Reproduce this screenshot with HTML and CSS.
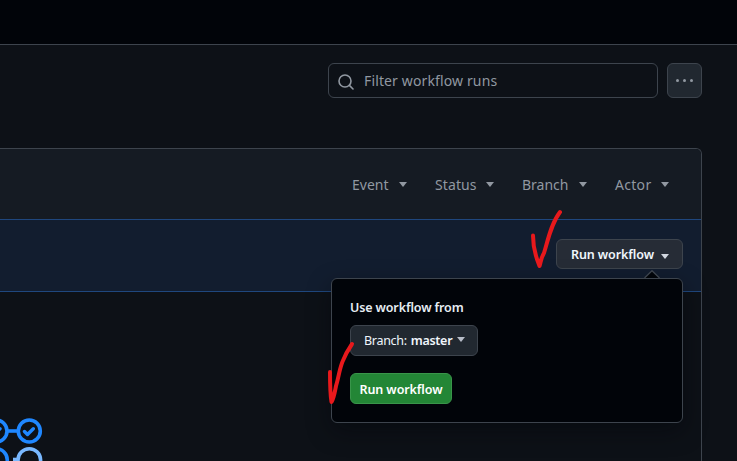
FILE: index.html
```html
<!DOCTYPE html>
<html lang="en">
<head>
<meta charset="utf-8">
<title>Workflow runs</title>
<link rel="stylesheet" href="styles.css">
</head>
<body>
<header class="topbar"></header>
<main class="content">
  <div class="toolbar">
    <label class="search">
      <svg class="search-icon" width="16" height="16" viewBox="0 0 16 16" fill="none" stroke="currentColor" stroke-width="1.6" stroke-linecap="round"><circle cx="7" cy="7" r="6"/><path d="M11.4 11.4 15 15"/></svg>
      <span class="search-text">Filter workflow runs</span>
    </label>
    <button class="more" aria-label="More options"><i></i><i></i><i></i></button>
  </div>
  <section class="runs">
    <div class="filters">
      <span class="filter event"><span>Event</span><i class="caret"></i></span>
      <span class="filter status"><span>Status</span><i class="caret"></i></span>
      <span class="filter branch"><span>Branch</span><i class="caret"></i></span>
      <span class="filter actor"><span>Actor</span><i class="caret"></i></span>
    </div>
    <div class="dispatch">
      <button class="btn run"><span>Run workflow</span><i class="caret"></i></button>
      <div class="popover">
        <svg class="tip" width="16" height="8" viewBox="0 0 16 8"><path d="M.5 8 8 .7 15.500 8" fill="#010409" stroke="#3d444d" stroke-width="1.3"/></svg>
        <div class="label"><span>Use workflow from</span></div>
        <button class="btn select"><span class="prefix">Branch:</span><b>master</b><i class="caret"></i></button>
        <button class="btn primary"><span>Run workflow</span></button>
      </div>
    </div>
    <div class="blank"></div>
  </section>
</main>
<svg class="graphic" width="50" height="50" viewBox="0 411 50 50" fill="none" stroke="#1f87ff" stroke-width="3.6">
  <path d="M8 431h9"/>
  <circle cx="-4" cy="431" r="11"/><circle cx="29.300" cy="431" r="11"/>
  <path d="M24.500 431.500l3 3 5.800-5.800M-8.800 431.500l3 3 5.800-5.800" stroke-linecap="round" stroke-linejoin="round" stroke-width="3.4"/>
  <circle cx="-4" cy="460" r="11.300"/>
  <path d="M13 459.500h6" stroke="#79b8ff"/><circle cx="29.300" cy="460" r="11.300" stroke="#79b8ff"/>
</svg>
<svg class="marks" width="737" height="461" viewBox="0 0 737 461" fill="none" stroke="#e8191c" stroke-width="4" stroke-linecap="round" stroke-linejoin="round">
  <path d="M533 235.500C533 247 535 255 539.500 266C541 262 540.500 259 544 253C548 240 551 224 560 212"/>
  <path d="M330 372C330 384 330 393 331.500 402C334 398 335 391 336 386C340 373 339 363 352 344"/>
</svg>
</body>
</html>
```
FILE: styles.css
```css
* { box-sizing: border-box; }
body {
  margin: 0;
  width: 737px;
  height: 461px;
  overflow: hidden;
  position: relative;
  background: #0d1117;
  color: #9198a1;
  font: 14px/20px "Noto Sans", "Open Sans", sans-serif;
}
button { font: inherit; color: inherit; padding: 0; margin: 0; }
.topbar { height: 45px; background: #010409; border-bottom: 1px solid #3d444d; }
.content { width: 702px; padding-top: 18px; }
.toolbar { display: flex; justify-content: flex-end; gap: 9px; height: 35px; }
.search {
  width: 330px;
  border: 1px solid #3d444d;
  border-radius: 6px;
  display: flex;
  align-items: center;
  padding-left: 9px;
}
.search-icon { margin: 3px 10px 0 0; }
.search-text { white-space: nowrap; letter-spacing: .13px; }
.more {
  width: 35px;
  border: 1px solid #3d444d;
  border-radius: 6px;
  background: #212830;
  display: flex;
  align-items: center;
  justify-content: center;
  gap: 4px;
}
.more i { width: 3px; height: 3px; border-radius: 50%; background: #9198a1; }
.runs {
  margin-top: 50px;
  border: 1px solid #3d444d;
  border-width: 1px 1px 0 0;
  border-radius: 0 6px 0 0;
  height: 313px;
}
.filters {
  height: 70px;
  background: #151b23;
  border-radius: 0 5px 0 0;
  display: flex;
  align-items: center;
  justify-content: flex-end;
  gap: 28px;
  padding: 2px 32px 0 0;
}
.filter { display: flex; align-items: center; justify-content: space-between; white-space: nowrap; }
.filter .caret { margin-top: -1px; }
.event { width: 55px; }
.status { width: 59px; letter-spacing: .1px; }
.branch { width: 65px; }
.actor { width: 54px; letter-spacing: .3px; }
.caret { width: 0; height: 0; border: 4.5px solid transparent; border-top-width: 5px; border-top-color: currentColor; border-bottom: 0; }
.dispatch {
  position: relative;
  height: 73px;
  background: #121d2f;
  border: 1px solid #1f477e;
  border-width: 1px 0;
  display: flex;
  justify-content: flex-end;
  padding: 19px 18px 0 0;
}
.btn {
  display: flex;
  align-items: center;
  border: 1px solid #3d444d;
  border-radius: 6px;
  background: #212830;
  color: #f0f6fc;
  font-size: 12.500px;
  font-weight: 600;
  white-space: nowrap;
}
.run { width: 127px; height: 30px; padding: 2px 13px 0 14px; justify-content: space-between; background: #262c36; letter-spacing: -.1px; }
.run .caret { color: #d1d7e0; margin-top: 2px; }
.popover {
  position: absolute;
  z-index: 2;
  top: 58px;
  right: 18px;
  width: 352px;
  height: 145px;
  padding: 19px 18px 18px;
  border: 1px solid #3d444d;
  border-radius: 6px;
  background: #010409;
  box-shadow: 0 8px 24px #01040966;
}
.tip { position: absolute; top: -9px; right: 22px; }
.label { color: #e6edf3; font-size: 12.500px; font-weight: 600; line-height: 20px; margin-bottom: 7px; letter-spacing: -.13px; }
.select { width: 128px; height: 31px; padding: 0 13px; font-weight: 400; letter-spacing: -.3px; }
.select b { font-weight: 600; margin-left: 4px; }
.select .caret { color: #b7bdc8; margin: -2px 0 0 5px; }
.primary { width: 102px; height: 31px; margin-top: 17px; padding-top: 2px; justify-content: center; background: #238636; border-color: #39954a; color: #fff; letter-spacing: -.1px; }
.graphic { position: absolute; left: 0; bottom: 0; }
.marks { position: absolute; inset: 0; z-index: 3; pointer-events: none; }
```
